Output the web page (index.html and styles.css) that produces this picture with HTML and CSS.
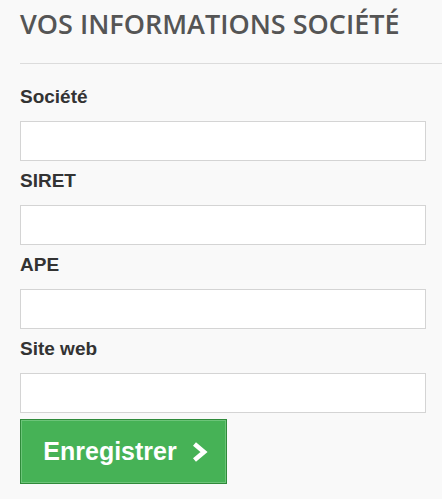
FILE: index.html
```html
<!DOCTYPE html>
<html lang="fr">
<head>
<meta charset="utf-8">
<link rel="stylesheet" href="styles.css">
</head>
<body>
<div class="page">
  <h1 class="title">VOS INFORMATIONS SOCIÉTÉ</h1>
  <hr class="sep">
  <form class="form">
    <label class="label" for="societe">Société</label>
    <input class="field" id="societe" type="text">
    <label class="label" for="siret">SIRET</label>
    <input class="field" id="siret" type="text">
    <label class="label" for="ape">APE</label>
    <input class="field" id="ape" type="text">
    <label class="label" for="web">Site web</label>
    <input class="field" id="web" type="text">
    <button class="btn" type="button">Enregistrer
      <svg class="chev" width="17" height="22" viewBox="0 0 17 22"><polyline points="3.5,3 13,11 3.5,19" fill="none" stroke="#fff" stroke-width="4.6" stroke-linecap="butt" stroke-linejoin="miter"/></svg>
    </button>
  </form>
</div>
</body>
</html>
```
FILE: styles.css
```css
html, body {
  margin: 0;
  padding: 0;
  background: #f9f9f9;
}
.page {
  padding-left: 20px;
}
.title {
  margin: 0;
  padding-top: 5px;
  font-family: "Open Sans", sans-serif;
  font-weight: 600;
  font-size: 27px;
  line-height: 38px;
  color: #555;
}
.sep {
  margin: 20px 0 0 0;
  border: 0;
  border-top: 1px solid #dcdcdc;
  height: 0;
}
.form {
  display: flex;
  flex-direction: column;
  align-items: flex-start;
  padding-top: 22px;
  width: 406px;
}
.label {
  font-family: "Liberation Sans", Arial, sans-serif;
  font-weight: bold;
  font-size: 19px;
  line-height: 22px;
  color: #333;
  margin-bottom: 13px;
}
.field {
  box-sizing: border-box;
  width: 406px;
  height: 40px;
  border: 1px solid #d4d4d4;
  background: #fff;
  margin: 0 0 9px 0;
  padding: 0 8px;
  outline: none;
}
.field:last-of-type {
  margin-bottom: 6px;
}
.btn {
  box-sizing: border-box;
  width: 207px;
  height: 65px;
  display: flex;
  align-items: center;
  justify-content: center;
  gap: 14px;
  padding: 0 0 0 4px;
  background: #46b256;
  border: 1px solid #2f8a3a;
  box-shadow: inset 0 0 0 1px #6cc479;
  color: #fff;
  font-family: "Liberation Sans", Arial, sans-serif;
  font-weight: bold;
  font-size: 25px;
  cursor: pointer;
}
.chev {
  display: block;
  margin-top: 1px;
}
```
